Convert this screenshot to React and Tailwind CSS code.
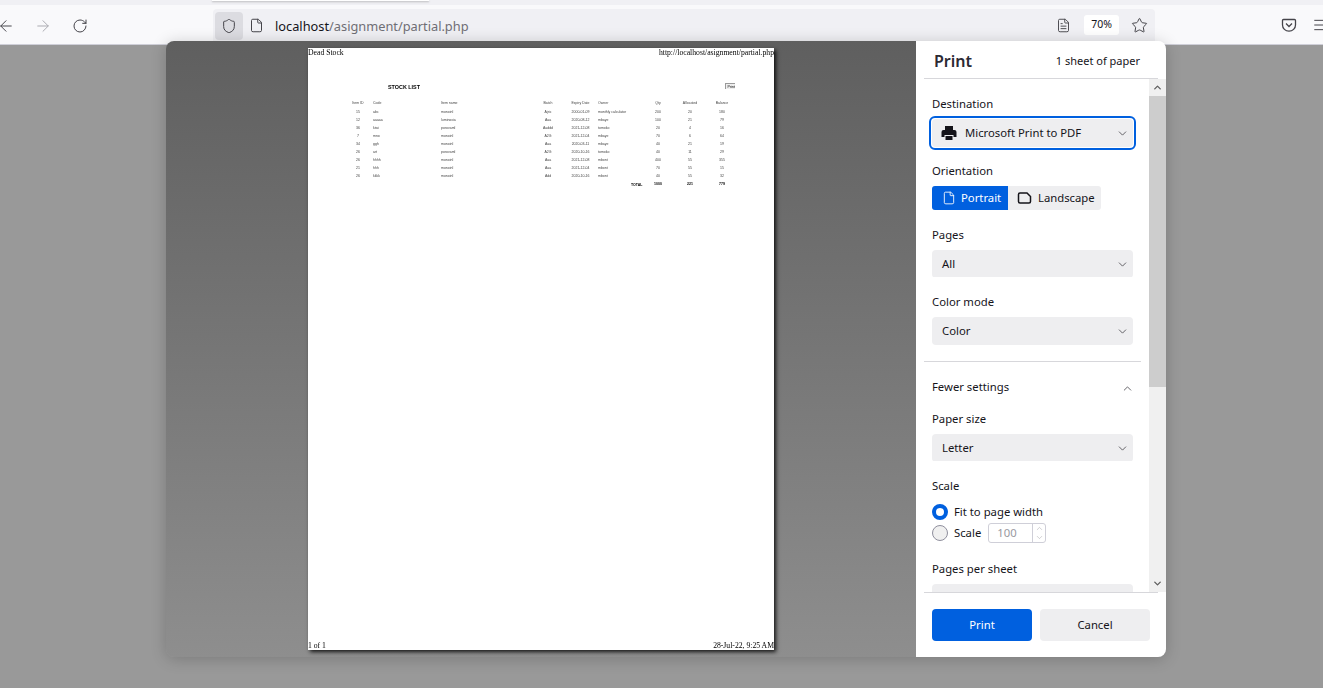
import React from "react";
import { ArrowLeft, ArrowRight, RotateCw, Shield, File, FileText, Star, ChevronDown, ChevronUp, Menu } from "lucide-react";

const rows = [
  ["15", "abc", "monoinl", "Ajric", "2000-01-09", "monthly calculator", "200", "20", "180"],
  ["12", "aaaaa", "luminoxia", "Aaa", "2020-08-12", "mbaye", "100", "21", "79"],
  ["36", "kiwi", "porovaml", "Aaddd", "2021-12-08", "tomoko", "20", "4", "16"],
  ["7", "mno", "monoinl", "A2G", "2021-12-04", "mbaye", "70", "6", "64"],
  ["34", "ggh", "monoinl", "Aaa", "2020-03-11", "mbaye", "40", "21", "19"],
  ["26", "art", "porovaml", "A2G", "2020-10-16", "tomoko", "40", "11", "29"],
  ["26", "hhhh", "monoinl", "Aaa", "2021-12-08", "mbont", "400", "55", "355"],
  ["21", "hhh", "monoinl", "Aaa", "2021-12-04", "mbont", "70", "55", "15"],
  ["26", "kkkk", "monoinl", "Add", "2020-10-16", "mbont", "40", "55", "32"],
];

const gridCols = "grid grid-cols-[21px_68px_92px_30px_35px_45px_30px_34px_30px] items-center h-[8.1px] whitespace-nowrap";

function TableRow({ cells, className = "" }) {
  return (
    <div className={`${gridCols} ${className}`}>
      <span className="pr-[9px] text-center">{cells[0]}</span>
      <span>{cells[1]}</span>
      <span>{cells[2]}</span>
      <span className="text-center">{cells[3]}</span>
      <span className="text-center">{cells[4]}</span>
      <span>{cells[5]}</span>
      <span className="text-center">{cells[6]}</span>
      <span className="text-center">{cells[7]}</span>
      <span className="text-center">{cells[8]}</span>
    </div>
  );
}

function Label({ children, className = "" }) {
  return <div className={`-translate-y-px text-[11.3px] leading-[16px] text-[#15141a] ${className}`}>{children}</div>;
}

function Select({ children, icon }) {
  return (
    <div className="flex h-[28px] w-[201px] items-center rounded-[4px] bg-[#eeeef0] pl-[10px] pr-[4px] text-[11.3px] text-[#15141a]">
      {icon}
      <span className="flex-1">{children}</span>
      <ChevronDown size={13} strokeWidth={1.5} className="text-[#45444a]" />
    </div>
  );
}

function PrinterIcon() {
  return (
    <svg width="16" height="16" viewBox="0 0 16 16" className="mr-[8px] ml-[-1px] mt-[-1px]" fill="#15141a">
      <path d="M4 1h8v4H4z" />
      <path d="M2.5 5h11A2 2 0 0 1 15.5 7v5h-3v-2h-9v2h-3V7a2 2 0 0 1 2-2z" />
      <path d="M4.5 11h7v4h-7z" />
    </svg>
  );
}

export default function App() {
  return (
    <div className="relative h-[688px] w-[1323px] overflow-hidden bg-[#999999] font-['Noto_Sans',sans-serif]">
      {/* Tab strip */}
      <div className="h-[5px] bg-[#f0f0f4]">
        <div className="ml-[212px] h-[1px] w-[217px] bg-white shadow-[0_1px_2px_rgba(0,0,0,0.3)]" />
      </div>
      {/* Toolbar */}
      <div className="flex h-[40px] items-start border-b border-[#cfcfd8] bg-[#f9f9fb] text-[#45444a]">
        <div className="ml-[-3px] mt-[12px] flex w-[216px] shrink-0 items-center">
          <ArrowLeft size={18} strokeWidth={1.3} />
          <ArrowRight size={18} strokeWidth={1.3} className="ml-[19px] text-[#aaaab0]" />
          <RotateCw size={16} strokeWidth={1.5} className="ml-[20px]" />
        </div>
        <div className="mt-[4px] flex h-[36px] w-[942px] shrink-0 items-start rounded-[4px] bg-[#f0f0f4] pl-[2px]">
          <div className="mt-[3px] flex h-[28px] w-[28px] items-center justify-center rounded-[4px] bg-[#dcdce1]">
            <Shield size={16} strokeWidth={1.5} />
          </div>
          <File size={15} strokeWidth={1.6} className="ml-[6px] mt-[9px]" />
          <span className="ml-[11px] mt-[8px] text-[12.8px] leading-[18px] text-[#15141a]">
            localhost<span className="text-[#6f6e75]">/asignment/partial.php</span>
          </span>
          <div className="flex-1" />
          <FileText size={15} strokeWidth={1.5} className="mt-[9px]" />
          <div className="ml-[13px] mt-[6px] flex h-[20px] w-[35px] items-center justify-center rounded-[3px] bg-white text-[10.5px] text-[#15141a]">
            70%
          </div>
          <Star size={17} strokeWidth={1.4} className="ml-[12px] mr-[7px] mt-[8px]" />
        </div>
        <svg width="16" height="16" viewBox="0 0 16 16" fill="none" stroke="currentColor" strokeWidth="1.3" className="ml-[126px] mt-[12px] shrink-0">
          <path d="M2.5 2.5h11a1 1 0 0 1 1 1V8a6.5 6.2 0 0 1-13 0V3.5a1 1 0 0 1 1-1z" />
          <path d="M5 6.5l3 3 3-3" />
        </svg>
        <Menu size={16} strokeWidth={1.5} className="ml-[15px] mt-[12px] shrink-0" />
      </div>

      {/* Print dialog */}
      <div className="absolute left-[166px] top-[41px] flex h-[616px] w-[1000px] overflow-hidden rounded-[8px] shadow-[0_2px_16px_rgba(0,0,0,0.2)]">
        {/* Preview */}
        <div className="flex w-[750px] flex-col items-start bg-gradient-to-b from-[#5f5f5f] to-[#8e8e8e] pl-[142px] pt-[7px]">
          <div className="flex h-[602px] w-[466px] flex-col bg-white text-black shadow-[2px_2px_4px_rgba(0,0,0,0.85)]">
            <div className="flex justify-between font-['Liberation_Serif',serif] text-[7.7px] leading-[9px] will-change-transform">
              <span>Dead Stock</span>
              <span>http://localhost/asignment/partial.php</span>
            </div>
            <div className="relative ml-[44px] mt-[25px] h-[10px] w-[385px] font-['Liberation_Sans',sans-serif] will-change-transform">
              <div className="ml-[36px] text-[5.4px] font-bold leading-[10px]">STOCK LIST</div>
              <div className="absolute right-[2px] top-[1px] h-[6px] w-[10px] overflow-hidden border-l border-t border-[#9a9a9a] bg-[#efefef] text-right text-[3.6px] leading-[6px]">
                Print
              </div>
            </div>
            <div className="ml-[44px] mt-[8px] font-['Liberation_Sans',sans-serif] text-[3.5px] text-[#444] will-change-transform">
              <TableRow cells={["Item ID", "Code", "Item name", "Batch", "Expiry Date", "Owner", "Qty", "Allocated", "Balance"]} />
              {rows.map((r, i) => (
                <TableRow key={i} cells={r} />
              ))}
              <TableRow className="font-bold text-black" cells={["", "", "", "", "", "", "1000", "221", "779"]} />
              <div className="mt-[-8px] ml-[279px] h-[8px] text-[3.5px] font-bold leading-[8px] text-black">TOTAL</div>
            </div>
            <div className="flex-1" />
            <div className="flex justify-between font-['Liberation_Serif',serif] text-[7.7px] leading-[9px] will-change-transform">
              <span>1 of 1</span>
              <span>28-Jul-22, 9:25 AM</span>
            </div>
          </div>
        </div>

        {/* Sidebar */}
        <div className="flex w-[250px] flex-col bg-white">
          <div className="mx-[8px] flex h-[38px] shrink-0 items-center justify-between border-b border-[#d7d7db] pl-[10px] pr-[18px] pt-[3px]">
            <span className="text-[16px] font-semibold text-[#2b2a33]">Print</span>
            <span className="text-[11px] text-[#15141a]">1 sheet of paper</span>
          </div>
          <div className="flex h-[513px] shrink-0">
            <div className="w-[233px] overflow-hidden pl-[16px]">
              <Label className="mt-[18px]">Destination</Label>
              <div className="ml-[-3px] mt-[3px] w-[207px] rounded-[6px] border-2 border-[#0060df] p-[1px]">
                <Select icon={<PrinterIcon />}>Microsoft Print to PDF</Select>
              </div>
              <Label className="mt-[14px]">Orientation</Label>
              <div className="mt-[6px] flex h-[24px] w-[169px] overflow-hidden rounded-[3px] bg-[#eeeef0] text-[11.3px]">
                <div className="flex w-[76px] items-center bg-[#0060df] pl-[10px] text-white">
                  <File size={14} strokeWidth={1.5} className="mr-[5px]" />
                  Portrait
                </div>
                <div className="flex items-center pl-[9px] text-[#15141a]">
                  <svg width="15" height="14" viewBox="0 0 15 14" fill="none" stroke="currentColor" strokeWidth="1.5" className="mr-[6px]">
                    <path d="M1.5 3.5a1.5 1.5 0 0 1 1.5-1.5h7l3.5 3.5v5a1.5 1.5 0 0 1-1.5 1.5H3a1.5 1.5 0 0 1-1.5-1.5z" />
                  </svg>
                  Landscape
                </div>
              </div>
              <Label className="mt-[18px]">Pages</Label>
              <div className="mt-[6px] h-[27px] overflow-hidden"><Select>All</Select></div>
              <Label className="mt-[18px]">Color mode</Label>
              <div className="mt-[6px]"><Select>Color</Select></div>
              <div className="ml-[-8px] mt-[16px] w-[217px] border-t border-[#d7d7db]" />
              <div className="mt-[18px] flex w-[201px] items-center justify-between">
                <Label>Fewer settings</Label>
                <ChevronUp size={13} strokeWidth={1.5} className="mr-[-1px] text-[#45444a]" />
              </div>
              <Label className="mt-[16px]">Paper size</Label>
              <div className="mt-[6px] h-[27px] overflow-hidden"><Select>Letter</Select></div>
              <Label className="mt-[18px]">Scale</Label>
              <div className="mt-[9px] flex h-[16px] items-center text-[11.3px] text-[#15141a]">
                <div className="mr-[6px] size-[16px] rounded-full border-[4px] border-[#0060df] bg-white" />
                Fit to page width
              </div>
              <div className="mt-[5px] flex h-[16px] items-center text-[11.3px] text-[#15141a]">
                <div className="mr-[6px] size-[16px] rounded-full border border-[#8f8f9d] bg-[#f0f0f0]" />
                Scale
                <div className="ml-[7px] flex h-[20px] w-[58px] items-center rounded-[3px] border border-[#cfcfd8] bg-white pl-[8px] text-[#9a9a9f]">
                  <span className="flex-1">100</span>
                  <div className="flex h-full w-[13px] flex-col items-center justify-center border-l border-[#cfcfd8]">
                    <ChevronUp size={9} strokeWidth={1.2} />
                    <ChevronDown size={9} strokeWidth={1.2} />
                  </div>
                </div>
              </div>
              <Label className="mt-[21px]">Pages per sheet</Label>
              <div className="mt-[6px] h-[28px] w-[201px] rounded-[4px] bg-[#eeeef0]" />
            </div>
            {/* Scrollbar */}
            <div className="flex w-[17px] flex-col bg-[#f0f0f0]">
              <div className="flex h-[17px] items-center justify-center">
                <ChevronUp size={11} strokeWidth={3} className="text-[#606060]" />
              </div>
              <div className="h-[291px] bg-[#cdcdcd]" />
              <div className="flex-1" />
              <div className="flex h-[17px] items-center justify-center">
                <ChevronDown size={11} strokeWidth={3} className="text-[#606060]" />
              </div>
            </div>
          </div>
          <div className="mx-[8px] flex-1 border-t border-[#d7d7db] pl-[8px] pt-[16px]">
            <div className="flex gap-[8px] text-[11.3px]">
              <div className="flex h-[32px] w-[100px] items-center justify-center rounded-[4px] bg-[#0060df] pt-[1px] text-white">Print</div>
              <div className="flex h-[32px] w-[110px] items-center justify-center rounded-[4px] bg-[#eeeef0] pt-[1px] text-[#15141a]">Cancel</div>
            </div>
          </div>
        </div>
      </div>
    </div>
  );
}
